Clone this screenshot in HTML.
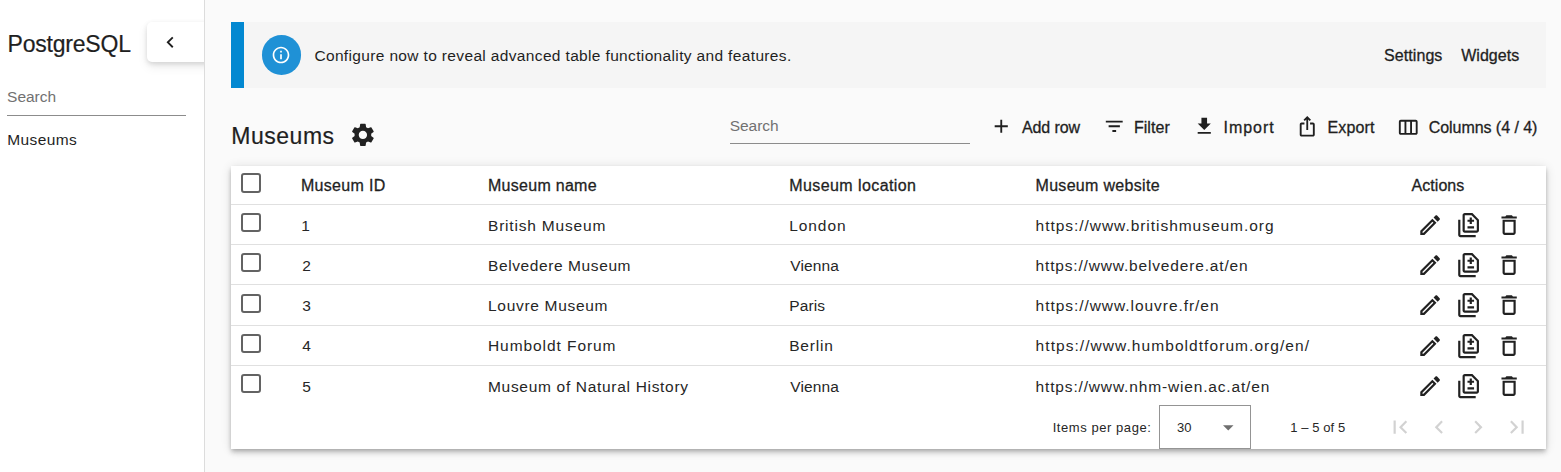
<!DOCTYPE html>
<html lang="en">
<head>
<meta charset="utf-8">
<title>PostgreSQL – Museums</title>
<style>
*{box-sizing:border-box;margin:0;padding:0}
html,body{width:1561px;height:472px;overflow:hidden}
body{position:relative;background:#fafafa;color:#212121;font-family:"Liberation Sans",sans-serif;font-size:15px}
.t{position:absolute;white-space:nowrap;line-height:1;color:#1f1f1f}
.t.m{-webkit-text-stroke:.3px #1f1f1f}
.t.h{-webkit-text-stroke:.2px #1f1f1f}
.t.g{color:#717171}
.t.c{color:#262626}
.abs{position:absolute}
.side{position:absolute;left:0;top:0;width:205px;height:472px;background:#fff;border-right:1px solid #dcdcdc;overflow:hidden}
.collapse{position:absolute;left:147px;top:22px;width:70px;height:39.7px;background:#fff;border-radius:5px 0 0 5px;box-shadow:0 2px 5px rgba(0,0,0,.13),0 5px 11px rgba(0,0,0,.07)}
.uline{position:absolute;height:1px;background:#8c8c8c}
.banner{position:absolute;left:231px;top:22px;width:1315px;height:66px;background:#f5f5f5;border-left:13px solid #0288d1}
.info{position:absolute;left:261.5px;top:35px;width:39.5px;height:39.5px;border-radius:50%;background:#1f91d6}
.card{position:absolute;left:231px;top:166px;width:1315px;height:282.5px;background:#fff;box-shadow:0 2px 4px -1px rgba(0,0,0,.2),0 4px 5px 0 rgba(0,0,0,.14),0 1px 10px 0 rgba(0,0,0,.12)}
.hl{position:absolute;left:231px;width:1315px;height:1px;background:#e0e0e0}
.cb{position:absolute;left:241.2px;width:19.8px;height:19.6px;border:2px solid #636363;border-radius:3px;background:#fff}
.sel{position:absolute;left:1159px;top:405px;width:92px;height:43.5px;border:1px solid #949494;background:#fff}
svg{position:absolute;overflow:visible}
</style>
</head>
<body>
<aside class="side"><div class="collapse"></div></aside>
<svg style="left:158.75px;top:31.3px" width="22.5" height="22.5" viewBox="0 0 24 24"><path fill="#1f1f1f" d="M15.41 7.41L14 6l-6 6 6 6 1.41-1.41L10.83 12z"/></svg>
<div class="uline" style="left:7px;top:115px;width:179px"></div>

<div class="banner"></div>
<div class="info"></div>
<svg style="left:271.25px;top:44.75px" width="20" height="20" viewBox="0 0 24 24"><path fill="#fff" d="M11 7h2v2h-2zm0 4h2v6h-2zm1-9C6.48 2 2 6.480 2 12s4.480 10 10 10 10-4.480 10-10S17.520 2 12 2zm0 18c-4.410 0-8-3.590-8-8s3.590-8 8-8 8 3.590 8 8-3.590 8-8 8z"/></svg>

<!-- title gear -->
<svg style="left:349.3px;top:121.1px" width="27.8" height="27.8" viewBox="0 0 24 24"><path fill="#212121" d="M19.140 12.940c.040-.300.060-.610.060-.940 0-.320-.020-.640-.070-.940l2.030-1.580c.180-.140.230-.410.120-.610l-1.920-3.320c-.120-.220-.370-.290-.590-.220l-2.390.960c-.500-.380-1.030-.700-1.620-.940l-.360-2.540c-.040-.240-.240-.410-.480-.410h-3.840c-.240 0-.430.170-.470.410l-.360 2.540c-.590.240-1.130.570-1.620.940l-2.390-.960c-.220-.080-.470 0-.590.220L2.740 8.870c-.120.210-.08.470.12.610l2.030 1.580c-.050.300-.090.630-.090.940s.020.640.070.940l-2.030 1.580c-.180.140-.230.410-.120.610l1.920 3.320c.120.220.370.290.590.220l2.390-.960c.500.380 1.030.700 1.620.940l.360 2.540c.050.240.240.410.480.410h3.840c.240 0 .440-.170.470-.410l.360-2.540c.590-.240 1.130-.560 1.620-.940l2.390.960c.220.080.470 0 .590-.220l1.920-3.320c.120-.220.070-.470-.120-.610l-2.010-1.580zM12 15.600c-1.980 0-3.600-1.620-3.600-3.600s1.620-3.600 3.600-3.600 3.600 1.620 3.600 3.600-1.620 3.600-3.600 3.600z"/></svg>

<div class="uline" style="left:730px;top:143px;width:240px"></div>

<!-- toolbar icons (22.5px) -->
<svg style="left:990.05px;top:115.1px" width="22.5" height="22.5" viewBox="0 0 24 24"><path fill="#1f1f1f" d="M19 13h-6v6h-2v-6H5v-2h6V5h2v6h6v2z"/></svg>
<svg style="left:1103.05px;top:115.1px" width="22.5" height="22.5" viewBox="0 0 24 24"><path fill="#1f1f1f" d="M10 18h4v-2h-4v2zM3 6v2h18V6H3zm3 7h12v-2H6v2z"/></svg>
<svg style="left:1193.25px;top:115.3px" width="22.5" height="22.5" viewBox="0 0 24 24"><path fill="#1f1f1f" d="M19 9h-4V3H9v6H5l7 7 7-7zM5 18v2h14v-2H5z"/></svg>
<svg style="left:1296.45px;top:115.3px" width="22.5" height="22.5" viewBox="0 0 24 24"><path fill="#1f1f1f" d="M16 5l-1.420 1.420-1.590-1.590V16h-1.980V4.830L9.420 6.420 8 5l4-4 4 4zm4 5v11c0 1.100-.900 2-2 2H6c-1.110 0-2-.900-2-2V10c0-1.110.890-2 2-2h3v2H6v11h12V10h-3V8h3c1.100 0 2 .890 2 2z"/></svg>
<svg style="left:1397.25px;top:115.5px" width="22.5" height="22.5" viewBox="0 0 24 24"><path fill="#1f1f1f" d="M20 4H4c-1.100 0-2 .900-2 2v12c0 1.100.900 2 2 2h16c1.100 0 2-.900 2-2V6c0-1.100-.900-2-2-2zM8 18H4V6h4v12zm6 0h-4V6h4v12zm6 0h-4V6h4v12z"/></svg>

<div class="card"></div>
<div class="hl" style="top:204px"></div>
<div class="hl" style="top:244px"></div>
<div class="hl" style="top:284px"></div>
<div class="hl" style="top:325px"></div>
<div class="hl" style="top:365px"></div>
<div class="cb" style="top:172.9px;height:20px"></div>
<div class="cb" style="top:213.00px;height:19px"></div>
<svg style="left:1416.88px;top:211.78px" width="26.25" height="26.25" viewBox="0 0 24 24"><path fill="#212121" d="M14.060 9.020l.920.920L5.920 19H5v-.920l9.060-9.060M17.660 3c-.250 0-.510.100-.700.290l-1.830 1.830 3.750 3.750 1.830-1.830c.390-.390.390-1.020 0-1.410l-2.340-2.340c-.200-.200-.450-.290-.710-.290zm-3.600 3.190L3 17.250V21h3.750L17.810 9.940l-3.750-3.750z"/></svg>
<svg style="left:1456.08px;top:211.78px" width="26.25" height="26.25" viewBox="0 0 24 24"><path fill="#212121" d="M18 23H4c-1.100 0-2-.900-2-2V7h2v14h14v2zM14.500 7V5h-2v2h-2v2h2v2h2V9h2V7h-2zm2 6h-6v2h6v-2zM15 1H8c-1.100 0-1.990.900-1.990 2L6 17c0 1.100.890 2 1.990 2H19c1.100 0 2-.900 2-2V7l-6-6zm4 16H8V3h6.170L19 7.830V17z"/></svg>
<svg style="left:1495.78px;top:211.78px" width="26.25" height="26.25" viewBox="0 0 24 24"><path fill="#212121" d="M6 19c0 1.100.900 2 2 2h8c1.100 0 2-.900 2-2V7H6v12zM8 9h8v10H8V9zm7.500-5l-1-1h-5l-1 1H5v2h14V4h-3.500z"/></svg>
<div class="cb" style="top:253.25px;height:19px"></div>
<svg style="left:1416.88px;top:252.02px" width="26.25" height="26.25" viewBox="0 0 24 24"><path fill="#212121" d="M14.060 9.020l.920.920L5.920 19H5v-.920l9.060-9.060M17.660 3c-.250 0-.510.100-.700.290l-1.830 1.830 3.750 3.750 1.830-1.830c.390-.390.390-1.020 0-1.410l-2.340-2.340c-.200-.200-.450-.290-.710-.290zm-3.600 3.190L3 17.250V21h3.750L17.810 9.940l-3.750-3.750z"/></svg>
<svg style="left:1456.08px;top:252.02px" width="26.25" height="26.25" viewBox="0 0 24 24"><path fill="#212121" d="M18 23H4c-1.100 0-2-.900-2-2V7h2v14h14v2zM14.500 7V5h-2v2h-2v2h2v2h2V9h2V7h-2zm2 6h-6v2h6v-2zM15 1H8c-1.100 0-1.990.900-1.990 2L6 17c0 1.100.890 2 1.990 2H19c1.100 0 2-.900 2-2V7l-6-6zm4 16H8V3h6.170L19 7.830V17z"/></svg>
<svg style="left:1495.78px;top:252.02px" width="26.25" height="26.25" viewBox="0 0 24 24"><path fill="#212121" d="M6 19c0 1.100.900 2 2 2h8c1.100 0 2-.900 2-2V7H6v12zM8 9h8v10H8V9zm7.500-5l-1-1h-5l-1 1H5v2h14V4h-3.500z"/></svg>
<div class="cb" style="top:293.50px;height:19px"></div>
<svg style="left:1416.88px;top:292.27px" width="26.25" height="26.25" viewBox="0 0 24 24"><path fill="#212121" d="M14.060 9.020l.920.920L5.920 19H5v-.920l9.060-9.060M17.660 3c-.250 0-.510.100-.700.290l-1.830 1.830 3.750 3.750 1.830-1.830c.390-.390.390-1.020 0-1.410l-2.340-2.340c-.200-.200-.450-.290-.710-.290zm-3.600 3.190L3 17.250V21h3.750L17.810 9.940l-3.750-3.750z"/></svg>
<svg style="left:1456.08px;top:292.27px" width="26.25" height="26.25" viewBox="0 0 24 24"><path fill="#212121" d="M18 23H4c-1.100 0-2-.900-2-2V7h2v14h14v2zM14.500 7V5h-2v2h-2v2h2v2h2V9h2V7h-2zm2 6h-6v2h6v-2zM15 1H8c-1.100 0-1.990.900-1.990 2L6 17c0 1.100.890 2 1.990 2H19c1.100 0 2-.900 2-2V7l-6-6zm4 16H8V3h6.170L19 7.830V17z"/></svg>
<svg style="left:1495.78px;top:292.27px" width="26.25" height="26.25" viewBox="0 0 24 24"><path fill="#212121" d="M6 19c0 1.100.900 2 2 2h8c1.100 0 2-.900 2-2V7H6v12zM8 9h8v10H8V9zm7.500-5l-1-1h-5l-1 1H5v2h14V4h-3.500z"/></svg>
<div class="cb" style="top:333.75px;height:19px"></div>
<svg style="left:1416.88px;top:332.52px" width="26.25" height="26.25" viewBox="0 0 24 24"><path fill="#212121" d="M14.060 9.020l.920.920L5.920 19H5v-.920l9.060-9.060M17.660 3c-.250 0-.510.100-.700.290l-1.830 1.830 3.750 3.750 1.830-1.830c.390-.390.390-1.020 0-1.410l-2.340-2.340c-.200-.200-.450-.290-.710-.290zm-3.600 3.190L3 17.250V21h3.750L17.810 9.940l-3.750-3.750z"/></svg>
<svg style="left:1456.08px;top:332.52px" width="26.25" height="26.25" viewBox="0 0 24 24"><path fill="#212121" d="M18 23H4c-1.100 0-2-.900-2-2V7h2v14h14v2zM14.500 7V5h-2v2h-2v2h2v2h2V9h2V7h-2zm2 6h-6v2h6v-2zM15 1H8c-1.100 0-1.990.900-1.990 2L6 17c0 1.100.890 2 1.990 2H19c1.100 0 2-.900 2-2V7l-6-6zm4 16H8V3h6.170L19 7.830V17z"/></svg>
<svg style="left:1495.78px;top:332.52px" width="26.25" height="26.25" viewBox="0 0 24 24"><path fill="#212121" d="M6 19c0 1.100.900 2 2 2h8c1.100 0 2-.900 2-2V7H6v12zM8 9h8v10H8V9zm7.500-5l-1-1h-5l-1 1H5v2h14V4h-3.500z"/></svg>
<div class="cb" style="top:374.00px;height:19px"></div>
<svg style="left:1416.88px;top:372.77px" width="26.25" height="26.25" viewBox="0 0 24 24"><path fill="#212121" d="M14.060 9.020l.920.920L5.920 19H5v-.920l9.060-9.060M17.660 3c-.250 0-.510.100-.700.290l-1.830 1.830 3.750 3.750 1.830-1.830c.390-.390.390-1.020 0-1.410l-2.340-2.340c-.200-.200-.450-.290-.710-.290zm-3.600 3.190L3 17.250V21h3.750L17.810 9.940l-3.750-3.750z"/></svg>
<svg style="left:1456.08px;top:372.77px" width="26.25" height="26.25" viewBox="0 0 24 24"><path fill="#212121" d="M18 23H4c-1.100 0-2-.900-2-2V7h2v14h14v2zM14.500 7V5h-2v2h-2v2h2v2h2V9h2V7h-2zm2 6h-6v2h6v-2zM15 1H8c-1.100 0-1.990.900-1.990 2L6 17c0 1.100.890 2 1.990 2H19c1.100 0 2-.900 2-2V7l-6-6zm4 16H8V3h6.170L19 7.830V17z"/></svg>
<svg style="left:1495.78px;top:372.77px" width="26.25" height="26.25" viewBox="0 0 24 24"><path fill="#212121" d="M6 19c0 1.100.900 2 2 2h8c1.100 0 2-.900 2-2V7H6v12zM8 9h8v10H8V9zm7.500-5l-1-1h-5l-1 1H5v2h14V4h-3.500z"/></svg>
<div class="sel"></div>
<svg style="left:1222.8px;top:424.6px" width="10.5" height="5.6" viewBox="0 0 10 5"><path fill="#6f6f6f" d="M0 0h10L5 5z"/></svg>
<!-- paginator icons 27px, disabled -->
<svg style="left:1387.38px;top:414.07px" width="26.25" height="26.25" viewBox="0 0 24 24"><path fill="#d2d2d2" d="M18.410 16.590L13.820 12l4.590-4.590L17 6l-6 6 6 6zM6 6h2v12H6z"/></svg>
<svg style="left:1426.47px;top:414.07px" width="26.25" height="26.25" viewBox="0 0 24 24"><path fill="#d2d2d2" d="M15.410 7.410L14 6l-6 6 6 6 1.410-1.410L10.830 12z"/></svg>
<svg style="left:1464.67px;top:414.07px" width="26.25" height="26.25" viewBox="0 0 24 24"><path fill="#d2d2d2" d="M10 6L8.590 7.410 13.170 12l-4.580 4.590L10 18l6-6z"/></svg>
<svg style="left:1503.78px;top:414.07px" width="26.25" height="26.25" viewBox="0 0 24 24"><path fill="#d2d2d2" d="M5.590 7.410L10.180 12l-4.590 4.590L7 18l6-6-6-6zM16 6h2v12h-2z"/></svg>
<span class="t h" style="left:7.5px;top:32.9px;font-size:23px;letter-spacing:-0.20px">PostgreSQL</span>
<span class="t g" style="left:7.1px;top:88.9px;font-size:15.5px;letter-spacing:-0.04px">Search</span>
<span class="t" style="left:7.3px;top:131.6px;font-size:15.5px;letter-spacing:0.39px">Museums</span>
<span class="t" style="left:314.4px;top:47.9px;font-size:15.5px;letter-spacing:0.35px">Configure now to reveal advanced table functionality and features.</span>
<span class="t m" style="left:1384.0px;top:47.9px;font-size:16px;letter-spacing:0.08px">Settings</span>
<span class="t m" style="left:1461.2px;top:47.9px;font-size:16px;letter-spacing:0.03px">Widgets</span>
<span class="t h" style="left:231.3px;top:125.2px;font-size:23px;letter-spacing:0.52px">Museums</span>
<span class="t g" style="left:729.7px;top:118.2px;font-size:15.5px;letter-spacing:-0.02px">Search</span>
<span class="t m" style="left:1021.9px;top:119.5px;font-size:16px;letter-spacing:-0.07px">Add row</span>
<span class="t m" style="left:1133.9px;top:119.5px;font-size:16px;letter-spacing:0.07px">Filter</span>
<span class="t m" style="left:1223.5px;top:119.5px;font-size:16px;letter-spacing:0.96px">Import</span>
<span class="t m" style="left:1327.4px;top:119.5px;font-size:16px;letter-spacing:0.18px">Export</span>
<span class="t m" style="left:1428.7px;top:119.5px;font-size:16px;letter-spacing:-0.05px">Columns (4 / 4)</span>
<span class="t m" style="left:300.9px;top:177.5px;font-size:16px;letter-spacing:0.33px">Museum ID</span>
<span class="t m" style="left:488.0px;top:177.5px;font-size:16px;letter-spacing:0.28px">Museum name</span>
<span class="t m" style="left:789.2px;top:177.5px;font-size:16px;letter-spacing:0.42px">Museum location</span>
<span class="t m" style="left:1035.5px;top:177.5px;font-size:16px;letter-spacing:0.31px">Museum website</span>
<span class="t m" style="left:1411.6px;top:177.5px;font-size:16px;letter-spacing:0.04px">Actions</span>
<span class="t c" style="left:301.2px;top:217.9px;font-size:15.5px;letter-spacing:0.00px">1</span>
<span class="t c" style="left:488.0px;top:217.9px;font-size:15.5px;letter-spacing:0.81px">British Museum</span>
<span class="t c" style="left:789.2px;top:217.9px;font-size:15.5px;letter-spacing:0.94px">London</span>
<span class="t c" style="left:1035.6px;top:217.9px;font-size:15.5px;letter-spacing:0.96px">https://www.britishmuseum.org</span>
<span class="t c" style="left:302.2px;top:257.9px;font-size:15.5px;letter-spacing:0.00px">2</span>
<span class="t c" style="left:488.0px;top:257.9px;font-size:15.5px;letter-spacing:0.60px">Belvedere Museum</span>
<span class="t c" style="left:790.2px;top:257.9px;font-size:15.5px;letter-spacing:0.13px">Vienna</span>
<span class="t c" style="left:1035.6px;top:257.9px;font-size:15.5px;letter-spacing:0.83px">https://www.belvedere.at/en</span>
<span class="t c" style="left:302.2px;top:297.9px;font-size:15.5px;letter-spacing:0.00px">3</span>
<span class="t c" style="left:488.0px;top:297.9px;font-size:15.5px;letter-spacing:0.70px">Louvre Museum</span>
<span class="t c" style="left:789.2px;top:297.9px;font-size:15.5px;letter-spacing:0.13px">Paris</span>
<span class="t c" style="left:1035.6px;top:297.9px;font-size:15.5px;letter-spacing:0.95px">https://www.louvre.fr/en</span>
<span class="t c" style="left:302.2px;top:337.9px;font-size:15.5px;letter-spacing:0.00px">4</span>
<span class="t c" style="left:488.0px;top:337.9px;font-size:15.5px;letter-spacing:0.93px">Humboldt Forum</span>
<span class="t c" style="left:789.2px;top:337.9px;font-size:15.5px;letter-spacing:0.80px">Berlin</span>
<span class="t c" style="left:1035.6px;top:337.9px;font-size:15.5px;letter-spacing:1.06px">https://www.humboldtforum.org/en/</span>
<span class="t c" style="left:302.2px;top:378.9px;font-size:15.5px;letter-spacing:0.00px">5</span>
<span class="t c" style="left:488.0px;top:378.9px;font-size:15.5px;letter-spacing:0.69px">Museum of Natural History</span>
<span class="t c" style="left:790.2px;top:378.9px;font-size:15.5px;letter-spacing:0.13px">Vienna</span>
<span class="t c" style="left:1035.6px;top:378.9px;font-size:15.5px;letter-spacing:0.84px">https://www.nhm-wien.ac.at/en</span>
<span class="t c" style="left:1052.7px;top:420.8px;font-size:13px;letter-spacing:0.56px">Items per page:</span>
<span class="t c" style="left:1176.9px;top:420.8px;font-size:13px;letter-spacing:0.07px">30</span>
<span class="t c" style="left:1290.2px;top:420.8px;font-size:13px;letter-spacing:0.08px">1 – 5 of 5</span>
</body>
</html>
